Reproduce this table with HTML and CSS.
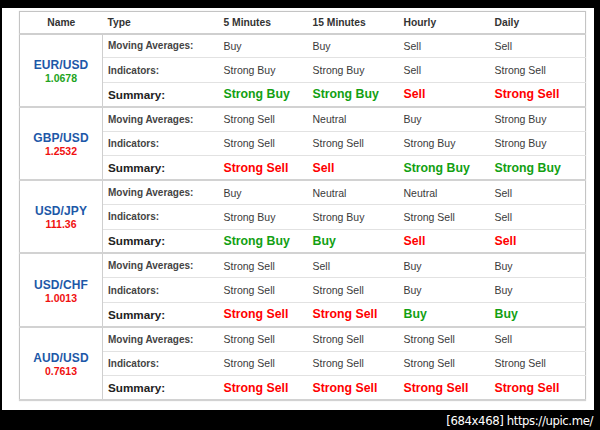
FILE: index.html
```html
<!DOCTYPE html>
<html>
<head>
<meta charset="utf-8">
<link rel="stylesheet" href="styles.css">
</head>
<body>
<div class="frame">
  <table class="tech">
    <colgroup>
      <col class="c-name"><col class="c-type"><col class="c-5"><col class="c-15"><col class="c-h"><col class="c-d">
    </colgroup>
    <thead>
      <tr class="head">
        <th class="th-name">Name</th><th>Type</th><th>5 Minutes</th><th>15 Minutes</th><th>Hourly</th><th>Daily</th>
      </tr>
    </thead>
    <tbody class="grp">
      <tr class="r1"><td class="pair" rowspan="3"><span class="sym">EUR/USD</span><span class="px up">1.0678</span></td><td class="lbl">Moving Averages:</td><td>Buy</td><td>Buy</td><td>Sell</td><td>Sell</td></tr>
      <tr class="r2"><td class="lbl">Indicators:</td><td>Strong Buy</td><td>Strong Buy</td><td>Sell</td><td>Strong Sell</td></tr>
      <tr class="r3"><td class="sum">Summary:</td><td class="buy">Strong Buy</td><td class="buy">Strong Buy</td><td class="sell">Sell</td><td class="sell">Strong Sell</td></tr>
    </tbody>
    <tbody class="grp">
      <tr class="r1"><td class="pair" rowspan="3"><span class="sym">GBP/USD</span><span class="px down">1.2532</span></td><td class="lbl">Moving Averages:</td><td>Strong Sell</td><td>Neutral</td><td>Buy</td><td>Strong Buy</td></tr>
      <tr class="r2"><td class="lbl">Indicators:</td><td>Strong Sell</td><td>Strong Sell</td><td>Strong Buy</td><td>Strong Buy</td></tr>
      <tr class="r3"><td class="sum">Summary:</td><td class="sell">Strong Sell</td><td class="sell">Sell</td><td class="buy">Strong Buy</td><td class="buy">Strong Buy</td></tr>
    </tbody>
    <tbody class="grp">
      <tr class="r1"><td class="pair" rowspan="3"><span class="sym">USD/JPY</span><span class="px down">111.36</span></td><td class="lbl">Moving Averages:</td><td>Buy</td><td>Neutral</td><td>Neutral</td><td>Sell</td></tr>
      <tr class="r2"><td class="lbl">Indicators:</td><td>Strong Buy</td><td>Strong Buy</td><td>Strong Sell</td><td>Sell</td></tr>
      <tr class="r3"><td class="sum">Summary:</td><td class="buy">Strong Buy</td><td class="buy">Buy</td><td class="sell">Sell</td><td class="sell">Sell</td></tr>
    </tbody>
    <tbody class="grp">
      <tr class="r1"><td class="pair" rowspan="3"><span class="sym">USD/CHF</span><span class="px down">1.0013</span></td><td class="lbl">Moving Averages:</td><td>Strong Sell</td><td>Sell</td><td>Buy</td><td>Buy</td></tr>
      <tr class="r2"><td class="lbl">Indicators:</td><td>Strong Sell</td><td>Strong Sell</td><td>Buy</td><td>Buy</td></tr>
      <tr class="r3"><td class="sum">Summary:</td><td class="sell">Strong Sell</td><td class="sell">Strong Sell</td><td class="buy">Buy</td><td class="buy">Buy</td></tr>
    </tbody>
    <tbody class="grp">
      <tr class="r1"><td class="pair" rowspan="3"><span class="sym">AUD/USD</span><span class="px down">0.7613</span></td><td class="lbl">Moving Averages:</td><td>Strong Sell</td><td>Strong Sell</td><td>Strong Sell</td><td>Sell</td></tr>
      <tr class="r2"><td class="lbl">Indicators:</td><td>Strong Sell</td><td>Strong Sell</td><td>Strong Sell</td><td>Strong Sell</td></tr>
      <tr class="r3"><td class="sum">Summary:</td><td class="sell">Strong Sell</td><td class="sell">Strong Sell</td><td class="sell">Strong Sell</td><td class="sell">Strong Sell</td></tr>
    </tbody>
  </table>
</div>
<div class="footer"><span class="stamp">[684x468] https://upic.me/</span></div>
</body>
</html>
```

FILE: styles.css
```css
html, body {
  margin: 0;
  padding: 0;
  background: #000;
  width: 600px;
  height: 430px;
  overflow: hidden;
}
body {
  display: flex;
  flex-direction: column;
  font-family: "Liberation Sans", Arial, sans-serif;
}
.frame {
  box-sizing: border-box;
  width: 592px;
  height: 402px;
  margin: 8px 0 0 2px;
  background: #fff;
  padding: 3px 9px 0 17px;
}
.tech {
  width: 566px;
  border-collapse: collapse;
  table-layout: fixed;
  border: 1px solid #c4c4c4;
  box-shadow: 0 0 1px #ddd;
  color: #333;
}
.c-name { width: 83px; }
.c-type { width: 116px; }
.c-5 { width: 89px; }
.c-15 { width: 91px; }
.c-h { width: 91px; }
.c-d { width: 96px; }

.tech th, .tech td {
  padding: 0 0 0 5px;
  text-align: left;
  white-space: nowrap;
  overflow: hidden;
}
.head { height: 22px; }
.head th {
  font-size: 10.3px;
  font-weight: bold;
  color: #333;
  border-bottom: 2px solid #cfcfcf;
}
.head .th-name { text-align: center; padding: 0; }

.grp { border-bottom: 2px solid #d2d2d2; }
.r1, .r2, .r3 { height: 24.45px; }
.r1 td, .r2 td { border-bottom: 1px solid #e2e2e2; }
.tech td {
  font-size: 10.5px;
  color: #3a3a3a;
}
.tech td.pair {
  text-align: center;
  padding: 0;
  border-right: 1px solid #cfcfcf;
  border-bottom: none;
  vertical-align: middle;
}
.sym {
  display: block;
  font-size: 12px;
  font-weight: bold;
  color: #1d58a8;
  line-height: 14px;
  margin-top: 2px;
  letter-spacing: 0.1px;
}
.px {
  display: block;
  font-size: 10.5px;
  font-weight: bold;
  line-height: 13px;
}
.up { color: #22a322; }
.down { color: #f01010; }

.tech td.lbl {
  font-weight: bold;
  font-size: 10px;
  color: #444;
}
.tech td.sum {
  font-weight: bold;
  font-size: 11.7px;
  color: #222;
}
.tech td.buy, .tech td.sell {
  font-weight: bold;
  font-size: 12.3px;
}
.tech td.buy { color: #12a012; }
.tech td.sell { color: #ff0000; }

.footer {
  flex: 1;
  display: flex;
  justify-content: flex-end;
  align-items: center;
  padding-right: 7px;
}
.stamp {
  color: #fff;
  font-family: "DejaVu Sans Condensed", "DejaVu Sans", sans-serif;
  font-size: 13px;
  letter-spacing: -0.4px;
}
```
